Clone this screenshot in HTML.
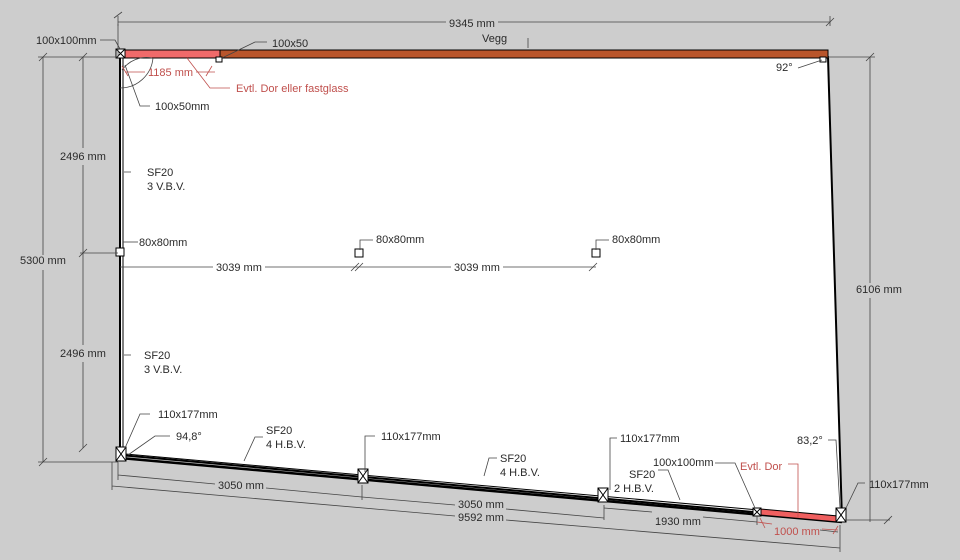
<!DOCTYPE html><html><head><style>body{margin:0;background:#cdcdcd}svg{display:block}text{font-family:"Liberation Sans",sans-serif;font-size:11px;fill:#2a2a2a}.r{fill:#c0504d}</style></head><body>
<svg width="960" height="560" viewBox="0 0 960 560">
<rect width="960" height="560" fill="#cdcdcd"/>
<polygon points="120,57 828,57 842,520 120,455" fill="#fff" stroke="#000" stroke-width="2"/>
<rect x="120" y="50" width="708" height="8" fill="#b9552b" stroke="#000" stroke-width="1"/>
<rect x="122" y="50" width="98" height="8" fill="#f06a6a" stroke="#000" stroke-width="1"/>
<line x1="123" y1="58" x2="123" y2="452" stroke="#000" stroke-width="1"/>
<line x1="120" y1="120" x2="120" y2="250" stroke="#000" stroke-width="1.5"/>
<line x1="120" y1="320" x2="120" y2="440" stroke="#000" stroke-width="1.5"/>
<line x1="120" y1="458" x2="842" y2="522" stroke="#000" stroke-width="2.5"/>
<line x1="125" y1="454" x2="838" y2="517" stroke="#000" stroke-width="1"/>
<polygon points="760,509 838,516 838,522 760,515" fill="#ef5f5f" stroke="#000" stroke-width="1"/>
<g stroke="#000" stroke-width="1" fill="#fff">
<rect x="116" y="49" width="9" height="9"/><path d="M116 49l9 9M125 49l-9 9"/>
<rect x="116" y="248" width="8" height="8"/>
<rect x="355" y="249" width="8" height="8"/><rect x="592" y="249" width="8" height="8"/>
<rect x="116" y="447" width="10" height="14"/><path d="M116 447l10 14M126 447l-10 14"/>
<rect x="358" y="469" width="10" height="14"/><path d="M358 469l10 14M368 469l-10 14"/>
<rect x="598" y="488" width="10" height="14"/><path d="M598 488l10 14M608 488l-10 14"/>
<rect x="753" y="508" width="8" height="8"/><path d="M753 508l8 8M761 508l-8 8"/>
<rect x="836" y="508" width="10" height="14"/><path d="M836 508l10 14M846 508l-10 14"/>
<rect x="216" y="57" width="6" height="5"/><rect x="820" y="57" width="6" height="5"/>
</g>
<g stroke="#444" stroke-width="0.8" fill="none">
<path d="M118 22H446M498 22H830M118 16v10M830 16v10"/>
<path d="M114 18l8-6M826 26l8-8"/>
<path d="M118 57V24"/>
<path d="M43 57V255M43 270V462M38 57H118M38 462H118M39 61l8-8M39 466l8-8"/>
<path d="M83 57V148M83 165V345M83 362V448M80 253H118M79 61l8-8M79 257l8-8M79 452l8-8"/>
<path d="M870 57V283M870 298V522M828 57H875M845 520H890M866 61l8-8M884 524l8-8"/>
<path d="M120 267H213M265 267H451M503 267H596M351 271l8-8M355 271l8-8M589 271l8-8"/>
<path d="M118 475L215 484M266 488L362 497M118 462V480M362 485V500"/>
<path d="M362 497L455 505M506 509L604 518M604 505V520"/>
<path d="M112 486L455 516M506 520L840 548M112 462V490M840 525V552"/>
<path d="M604 508L652 512M703 517L757 522M757 516V525"/>
<path d="M820 530L838 532"/>
<path d="M122 70A30 30 0 0 1 152 58"/><path d="M120 88A33 33 0 0 0 153 58"/>
<path d="M267 42H255L222 58"/>
<path d="M528 38V48"/>
<path d="M798 68L822 60"/>
<path d="M100 40H115L120 49"/>
<path d="M150 106H140L125 65"/>
<path d="M150 414H140L125 448"/>
<path d="M170 436H155L128 455"/>
<path d="M263 437H255L244 461"/>
<path d="M375 436H365V472"/>
<path d="M497 458H489L484 476"/>
<path d="M617 438H610V490"/>
<path d="M658 470H668L680 500"/>
<path d="M715 463H735L755 508"/>
<path d="M828 440H836L840 508"/>
<path d="M865 483H858L846 508"/>
<path d="M131 172H124M131 355H124"/>
<path d="M373 240H360V250M609 240H596V250"/>
<path d="M138 242H123"/>
</g>
<g stroke="#c0504d" stroke-width="0.8" fill="none">
<path d="M125 72H145M196 72H215M122 66l6 10M212 66l-6 10"/>
<path d="M187 58L210 88H230"/>
<path d="M788 464H798V518"/>
<path d="M760 518l5 10M838 526l-5 8M757 522L772 524M822 529L838 530"/>
</g>
<text x="449" y="27">9345 mm</text>
<text x="482" y="42">Vegg</text>
<text x="36" y="44">100x100mm</text>
<text x="272" y="47">100x50</text>
<text x="776" y="71">92°</text>
<text x="148" y="76" class="r">1185 mm</text>
<text x="236" y="92" class="r">Evtl. Dor eller fastglass</text>
<text x="155" y="110">100x50mm</text>
<text x="60" y="160">2496 mm</text>
<text x="147" y="176">SF20</text><text x="147" y="190">3 V.B.V.</text>
<text x="139" y="246">80x80mm</text>
<text x="376" y="243">80x80mm</text><text x="612" y="243">80x80mm</text>
<text x="216" y="271">3039 mm</text><text x="454" y="271">3039 mm</text>
<text x="20" y="264">5300 mm</text>
<text x="856" y="293">6106 mm</text>
<text x="60" y="357">2496 mm</text>
<text x="144" y="359">SF20</text><text x="144" y="373">3 V.B.V.</text>
<text x="158" y="418">110x177mm</text>
<text x="176" y="440">94,8°</text>
<text x="266" y="434">SF20</text><text x="266" y="448">4 H.B.V.</text>
<text x="381" y="440">110x177mm</text>
<text x="500" y="462">SF20</text><text x="500" y="476">4 H.B.V.</text>
<text x="620" y="442">110x177mm</text>
<text x="653" y="466">100x100mm</text>
<text x="740" y="470" class="r">Evtl. Dor</text>
<text x="797" y="444">83,2°</text>
<text x="629" y="478">SF20</text><text x="614" y="492">2 H.B.V.</text>
<text x="869" y="488">110x177mm</text>
<text x="218" y="489">3050 mm</text>
<text x="458" y="508">3050 mm</text>
<text x="458" y="521">9592 mm</text>
<text x="655" y="525">1930 mm</text>
<text x="774" y="535" class="r">1000 mm</text>
</svg></body></html>
